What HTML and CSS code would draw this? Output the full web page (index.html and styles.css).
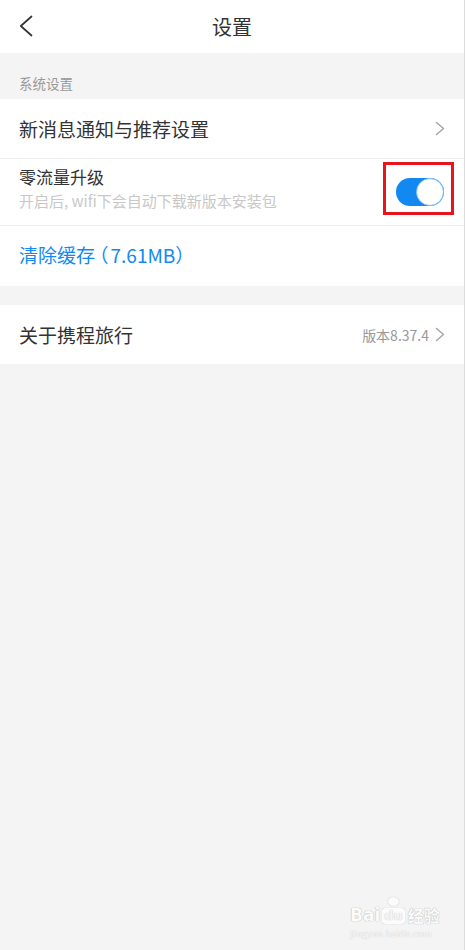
FILE: index.html
```html
<!DOCTYPE html>
<html lang="zh">
  <head>
    <meta charset="utf-8">
    <meta name="viewport" content="width=device-width, initial-scale=1.0">
    <title>设置</title>
    <link rel="stylesheet" href="styles.css">
  </head>
  <body>
    <div class="page">
      <header class="topbar">
        <a class="back">
          <svg width="14" height="22" viewBox="0 0 14 22"><polyline points="12.5,1.5 1.8,11 12.5,20.5" fill="none" stroke="#333" stroke-width="1.7" stroke-linejoin="round" stroke-linecap="round"/></svg>
        </a>
        <h1>设置</h1>
      </header>

      <div class="groupTitle">系统设置</div>

      <div class="group">
        <div class="row rowNotice">
          <span class="label">新消息通知与推荐设置</span>
          <svg class="arrow" width="10" height="15" viewBox="0 0 10 15"><polyline points="1.5,1.5 8.5,7.5 1.5,13.5" fill="none" stroke="#a6a6a6" stroke-width="1.5" stroke-linejoin="round" stroke-linecap="round"/></svg>
        </div>
        <div class="row rowUpgrade">
          <div class="texts">
            <span class="label small">零流量升级</span>
            <span class="hint">开启后, wifi下会自动下载新版本安装包</span>
          </div>
          <span class="switch on"></span>
          <span class="mark"></span>
        </div>
        <div class="row rowCache">
          <span class="label blue">清除缓存<span class="paren">（</span>7.61MB<span class="paren">）</span></span>
        </div>
      </div>

      <div class="spacer"></div>

      <div class="group">
        <div class="row rowAbout">
          <span class="label">关于携程旅行</span>
          <span class="value">版本8.37.4</span>
          <svg class="arrow" width="10" height="15" viewBox="0 0 10 15"><polyline points="1.5,1.5 8.5,7.5 1.5,13.5" fill="none" stroke="#a6a6a6" stroke-width="1.5" stroke-linejoin="round" stroke-linecap="round"/></svg>
        </div>
      </div>

      <div class="watermark">
        <div class="wmLogo">
          <span class="wmBai">Bai</span>
          <span class="wmDu">du<span class="paw"></span></span>
          <span class="wmJy">经验</span>
        </div>
        <div class="wmUrl">jingyan.baidu.com</div>
      </div>
    </div>
  </body>
</html>
```

FILE: styles.css
```css
:root {
  --bg: #f4f4f4;
  --text: #333333;
  --muted: #999999;
  --line: #efefef;
  --blue: #1289f0;
}

html, body {
  margin: 0;
  padding: 0;
}
body {
  background: var(--bg);
  font-family: "Noto Sans CJK SC", "Noto Sans", sans-serif;
  color: var(--text);
}
.page {
  position: relative;
  width: 465px;
  min-height: 950px;
  box-sizing: border-box;
  border-right: 1px solid #dcdcdc;
  background: var(--bg);
}

/* header */
.topbar {
  position: relative;
  height: 53px;
  background: #fff;
  display: flex;
  align-items: center;
  justify-content: center;
}
.topbar h1 {
  margin: 0;
  font-size: 20px;
  font-weight: 400;
  line-height: 28px;
  color: var(--text);
}
.back {
  position: absolute;
  left: 19px;
  top: 15px;
  display: block;
  width: 14px;
  height: 22px;
}
.back svg {
  display: block;
}

.groupTitle {
  height: 46px;
  box-sizing: border-box;
  padding: 20px 0 0 19px;
  font-size: 13.5px;
  line-height: 20px;
  color: var(--muted);
}

/* rows */
.group {
  background: #fff;
}
.row {
  position: relative;
  display: flex;
  align-items: center;
  padding: 0 19px 0 19px;
  border-bottom: 1px solid var(--line);
}
.row:last-child {
  border-bottom: 0;
}
.rowNotice {
  height: 59px;
}
.rowUpgrade {
  height: 66px;
  align-items: flex-start;
}
.rowCache {
  height: 60px;
}
.rowAbout {
  height: 59px;
}
.label {
  flex: 1;
  font-size: 19px;
  line-height: 26px;
  color: var(--text);
}
.label.small {
  font-size: 17px;
  line-height: 24px;
}
.label.blue {
  color: var(--blue);
  margin-top: -2px;
}
.paren {
  display: inline-block;
  width: 0.5em;
  text-align: center;
  font-feature-settings: "halt";
}
.paren:first-child,
.label.blue .paren:first-of-type {
  margin-left: 4px;
  margin-right: 2px;
}
.texts {
  flex: 1;
  display: flex;
  flex-direction: column;
  padding-top: 6px;
}
.hint {
  margin-top: 1px;
  font-size: 15px;
  line-height: 22px;
  color: #c8c8c8;
}
.value {
  font-size: 14px;
  color: var(--muted);
  margin-right: 6px;
}
.arrow {
  display: block;
}

/* toggle */
.switch {
  position: relative;
  align-self: center;
  width: 48px;
  height: 28px;
  border-radius: 14px;
  background: #dcdcdc;
  margin-right: 1px;
}
.switch.on {
  background: var(--blue);
}
.switch::after {
  content: "";
  position: absolute;
  top: 0;
  right: 0;
  width: 28px;
  height: 28px;
  box-sizing: border-box;
  border-radius: 50%;
  background: #fff;
  border: 1.5px solid #7cbcf5;
}
.mark {
  position: absolute;
  left: 383px;
  top: 3px;
  width: 71px;
  height: 53px;
  box-sizing: border-box;
  border: 3.5px solid #e8141c;
}

.spacer {
  height: 19px;
}

/* watermark */
.watermark {
  position: absolute;
  left: 350px;
  top: 894px;
  width: 90px;
  text-align: left;
  color: #fff;
}
.wmLogo {
  display: flex;
  align-items: flex-end;
  height: 30px;
}
.wmBai {
  font-family: "DejaVu Sans", sans-serif;
  font-weight: 700;
  font-size: 17px;
  line-height: 18px;
  color: #fbfbfb;
  text-shadow: 0 0 1px #b8b8b8, 0 0 1px #b8b8b8;
}
.wmDu {
  position: relative;
  margin-left: 2px;
  padding: 0 2px;
  font-family: "DejaVu Sans", sans-serif;
  font-weight: 700;
  font-size: 13px;
  line-height: 16px;
  color: #f4f4f4;
  background: #fbfbfb;
  border-radius: 3px;
  box-shadow: 0 0 1px #b0b0b0;
  text-shadow: 0 0 1px #b8b8b8;
}
.paw {
  position: absolute;
  left: 6px;
  top: -11px;
  width: 11px;
  height: 9px;
  border-radius: 50%;
  background: #fbfbfb;
  box-shadow: 0 0 1px #b0b0b0;
}
.wmJy {
  margin-left: 3px;
  font-size: 16px;
  line-height: 18px;
  font-weight: 700;
  color: #fbfbfb;
  text-shadow: 0 0 1px #b8b8b8, 0 0 1px #b8b8b8;
}
.wmUrl {
  margin-top: 3px;
  font-family: "Liberation Serif", serif;
  font-size: 11px;
  line-height: 12px;
  color: #fbfbfb;
  text-shadow: 0 0 1px #b8b8b8;
}
```
